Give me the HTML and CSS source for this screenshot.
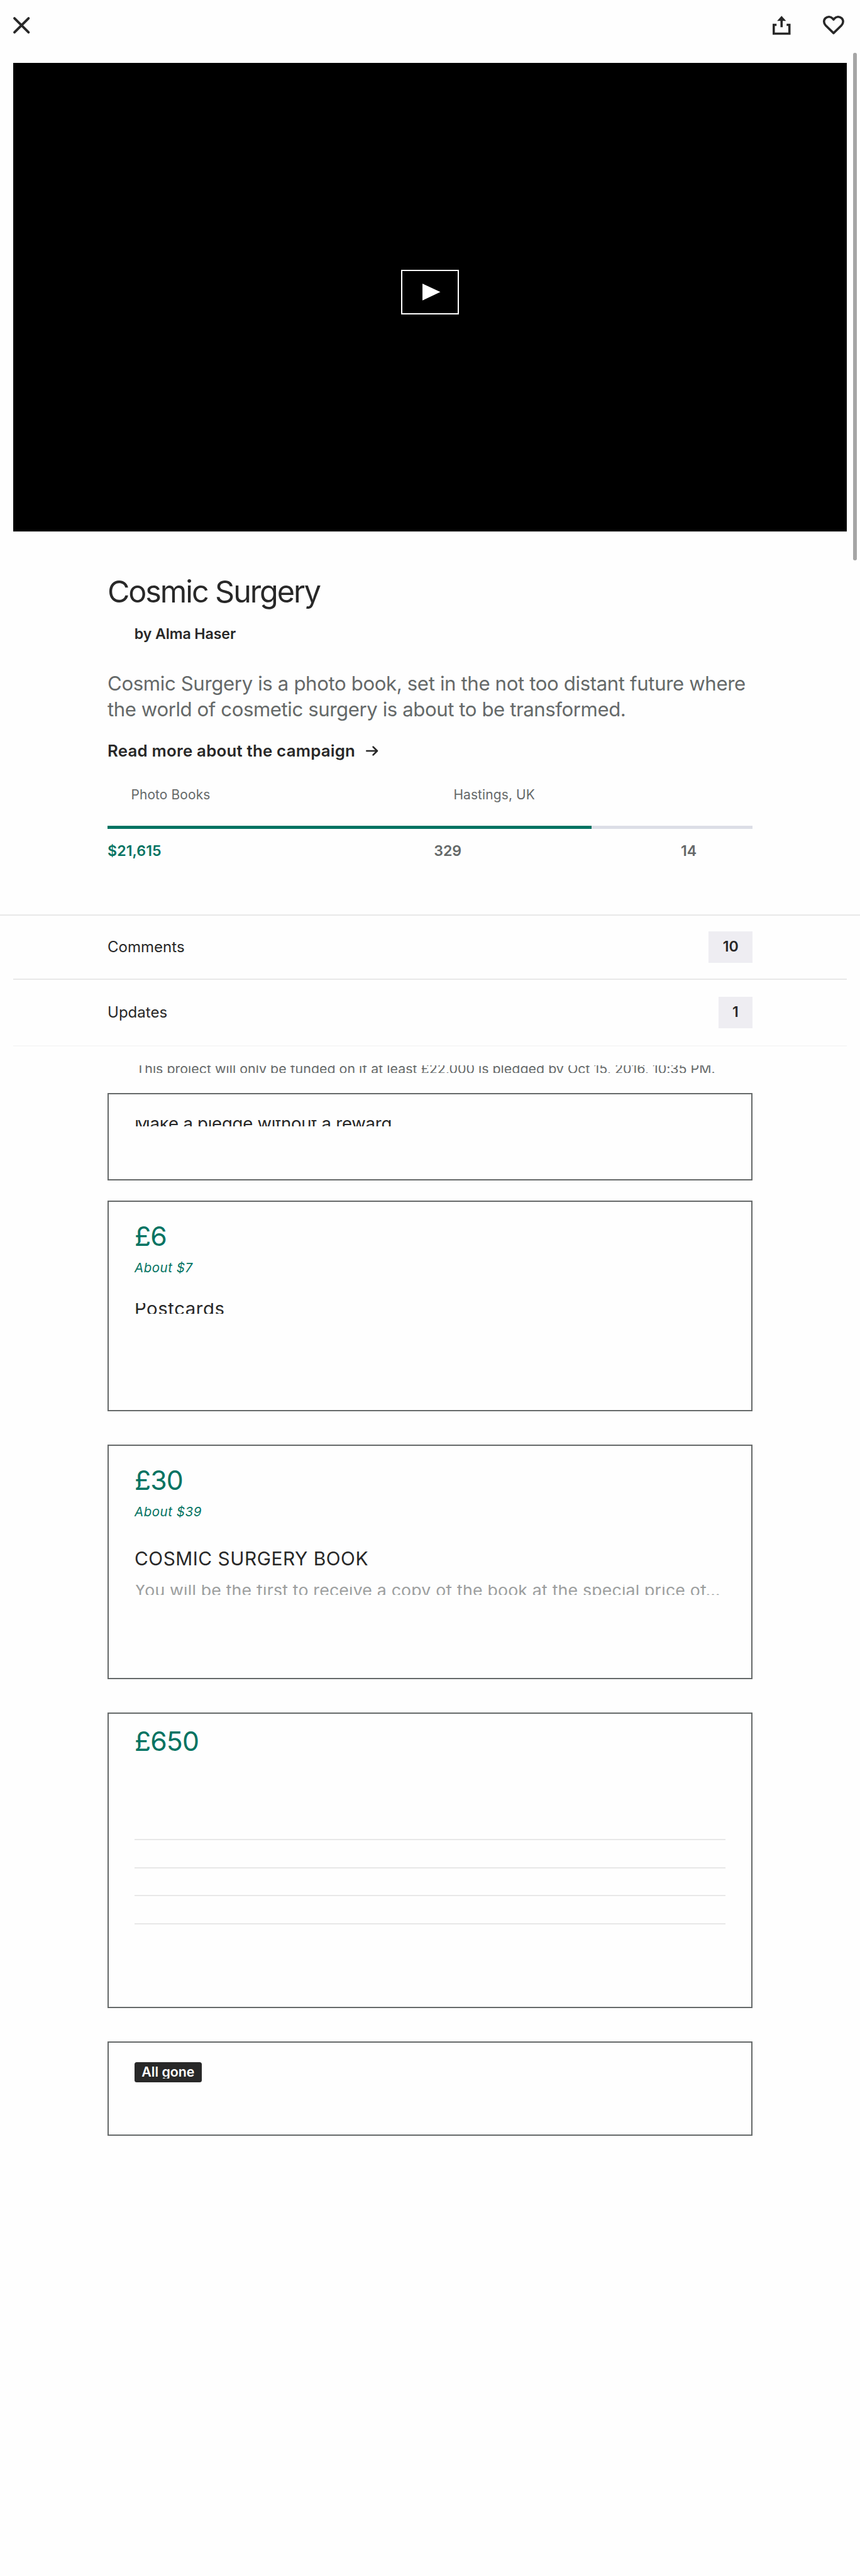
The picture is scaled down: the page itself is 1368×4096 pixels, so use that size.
FILE: index.html
```html
<!DOCTYPE html>
<html lang="en">
<head>
<meta charset="utf-8">
<title>Cosmic Surgery</title>
<link rel="stylesheet" href="styles.css">
</head>
<body>
<header class="topbar">
  <svg class="icon-close" viewBox="0 0 30 30"><path d="M2.3 2.3 27.7 27.7M27.7 2.3 2.3 27.7"/></svg>
  <div class="actions">
    <svg class="icon-share" viewBox="0 0 32 34"><path class="line" d="M7 16.2H2V32H30V16.2H25M16 20.5V7"/><path class="solid" d="M16 .3 24 9.2H8Z"/></svg>
    <svg class="icon-heart" viewBox="0 0 38 34"><path d="M19 31 5 17.5C1 13.300 1 7.600 4.600 4.300 8.400 .9 14 1.200 17.200 4.800L19 7 20.800 4.800C24 1.200 29.600 .9 33.400 4.300 37 7.600 37 13.300 33 17.500Z"/></svg>
  </div>
</header>
<div class="video">
  <div class="play"><svg viewBox="0 0 32 30"><path d="M0 0 32 15 0 30Z"/></svg></div>
</div>
<div class="scrollbar"></div>
<main>
  <section class="summary">
    <h1 class="title">Cosmic Surgery</h1>
    <p class="byline">by Alma Haser</p>
    <p class="blurb"><span class="blurb-a">Cosmic Surgery is a photo book, set in the not too distant future where</span><br><span class="blurb-b">the world of cosmetic surgery is about to be transformed.</span></p>
    <a class="more"><span>Read more about the campaign</span><svg viewBox="0 0 22 18"><path d="M1.500 9H20M13 1.800 20.200 9 13 16.200"/></svg></a>
    <div class="meta"><span class="category">Photo Books</span><span class="place">Hastings, UK</span></div>
    <div class="progress"><div class="fill" style="width:75%"></div></div>
    <div class="stats"><span class="pledged">$21,615</span><span class="backers">329</span><span class="days">14</span></div>
  </section>
  <nav class="links">
    <a class="row comments"><span>Comments</span><b>10</b></a>
    <a class="row updates"><span>Updates</span><b>1</b></a>
  </nav>
  <section class="rewards">
    <p class="note">This project will only be funded on if at least £22,000 is pledged by Oct 15, 2016, 10:35 PM.</p>
    <article class="card no-reward"><p class="pledge">Make a pledge without a reward</p></article>
    <article class="card postcards">
      <p class="price">£6</p><p class="about">About $7</p><h2 class="name clipped">Postcards</h2>
    </article>
    <article class="card book">
      <p class="price">£30</p><p class="about">About $39</p><h2 class="name">COSMIC SURGERY BOOK</h2>
      <p class="detail">You will be the first to receive a copy of the book at the special price of…</p>
    </article>
    <article class="card premium">
      <p class="price">£650</p>
      <div class="rules"><hr><hr><hr><hr></div>
    </article>
    <article class="card gone"><div class="tag"><span>All gone</span></div></article>
  </section>
</main>
</body>
</html>
```
FILE: styles.css
```css
/* 1rem = 100 design units on a 1536-unit wide canvas */
html { font-size: calc(100vw / 15.36); }
* { box-sizing: border-box; }
body {
  margin: 0;
  height: 4096px;
  overflow: hidden;
  background: #fefefe;
  color: #282828;
  font-family: Inter, "Liberation Sans", sans-serif;
}
h1, h2, p { margin: 0; font-weight: 400; }
span, p, h1, h2 { white-space: nowrap; }
svg { display: block; overflow: visible; fill: none; stroke: #282828; }

.topbar { display: flex; justify-content: space-between; align-items: flex-start; height: 1.12rem; padding: .28rem .28rem 0 .233rem; }
.icon-close { width: .297rem; height: .297rem; margin-top: .02rem; stroke-width: 4.4; stroke-linecap: round; }
.actions { display: flex; gap: .58rem; }
.icon-share { width: .32rem; height: .34rem; }
.icon-share .line { stroke-width: 4; }
.icon-share .solid { fill: #282828; stroke: none; }
.icon-heart { width: .38rem; height: .34rem; stroke-width: 4; stroke-linejoin: round; }

.video { display: flex; align-items: center; justify-content: center; height: 8.39rem; margin: 0 .24rem; padding-bottom: .17rem; background: #000; border-bottom: 2px solid #ececec; }
.play { display: flex; align-items: center; justify-content: center; width: 1.04rem; height: .8rem; border: 2px solid #fff; padding-left: .04rem; }
.play svg { width: .32rem; height: .3rem; }
.play path { fill: #fff; stroke: none; }
.scrollbar { position: absolute; top: .94rem; left: 15.24rem; width: .06rem; height: 9.06rem; border-radius: .03rem; background: #a6a6a6; }

.summary, .rewards { padding: 0 1.92rem; }
.title { margin-top: .758rem; font-size: .545rem; line-height: .6rem; letter-spacing: -.0235rem; }
.byline { margin: .29rem 0 0 .48rem; font-size: .26rem; line-height: .32rem; font-weight: 600; letter-spacing: -.001rem; }
.blurb { margin-top: .498rem; font-size: .35rem; line-height: .46rem; letter-spacing: -.0041rem; color: #656969; }
.blurb-b { letter-spacing: -.0047rem; }
.more { display: flex; align-items: center; gap: .19rem; margin-top: .337rem; font-size: .29rem; line-height: .34rem; font-weight: 600; letter-spacing: .0025rem; }
.more svg { width: .22rem; height: .18rem; stroke-width: 3; stroke-linecap: round; stroke-linejoin: round; }
.meta { display: grid; grid-template-columns: 5.76rem 1fr; margin-top: .473rem; padding-left: .42rem; font-size: .235rem; line-height: .3rem; letter-spacing: .0015rem; color: #656969; }
.progress { height: .06rem; margin-top: .397rem; background: #dcdee6; }
.fill { height: 100%; background: #037362; }
.stats { display: grid; grid-template-columns: 5.83rem 4.41rem 1fr; margin-top: .235rem; font-size: .26rem; line-height: .32rem; font-weight: 600; color: #656969; }
.pledged { color: #037362; letter-spacing: .001rem; }

.links { margin-top: .965rem; border-top: 2px solid #e8e8e8; }
.row { display: flex; align-items: center; justify-content: space-between; height: 1.15rem; margin: 0 .24rem; padding: 0 1.68rem; border-bottom: 2px solid #e8e8e8; font-size: .27rem; line-height: .34rem; }
.updates { height: 1.19rem; border-color: #f7f7f7; }
.row b { height: .56rem; padding: 0 .25rem; background: #eeedf2; font-size: .26rem; line-height: .55rem; font-weight: 600; }

.note { height: .127rem; margin: .34rem 0 0 .51rem; overflow: hidden; font-size: .24rem; line-height: .127rem; letter-spacing: .0003rem; color: #656969; }
.card { margin-top: .598rem; padding: 0 .46rem; border: 2px solid #656969; }
.no-reward { height: 1.56rem; margin-top: .36rem; padding-top: .46rem; }
.pledge { height: .12rem; overflow: hidden; font-size: .31rem; line-height: .12rem; letter-spacing: -.0031rem; }
.postcards { height: 3.767rem; margin-top: .358rem; padding-top: .365rem; }
.book { height: 4.18rem; padding-top: .361rem; }
.premium { height: 5.28rem; padding-top: .235rem; }
.gone { height: 1.68rem; padding-top: .34rem; }
.price { font-size: .48rem; line-height: .52rem; letter-spacing: -.01rem; color: #037362; }
.about { margin-top: .15rem; font-size: .23rem; line-height: .3rem; font-style: italic; letter-spacing: .0062rem; color: #037362; }
.name { margin-top: .49rem; font-size: .335rem; line-height: .4rem; letter-spacing: .006rem; }
.name.clipped { height: .2rem; margin-top: .474rem; overflow: hidden; font-size: .33rem; line-height: .2rem; }
.detail { height: .18rem; margin-top: .255rem; overflow: hidden; font-size: .3rem; line-height: .18rem; letter-spacing: .002rem; color: #9c9e9e; }
.rules { display: flex; flex-direction: column; gap: .48rem; margin-top: 1.485rem; }
.rules hr { width: 100%; height: .02rem; margin: 0; border: 0; background: #e8e8e8; }
.tag { display: flex; align-items: center; justify-content: center; width: 1.2rem; height: .36rem; border-radius: .04rem; background: #282828; color: #fff; }
.tag span { height: .24rem; overflow: hidden; font-size: .24rem; line-height: .24rem; font-weight: 600; }
```
